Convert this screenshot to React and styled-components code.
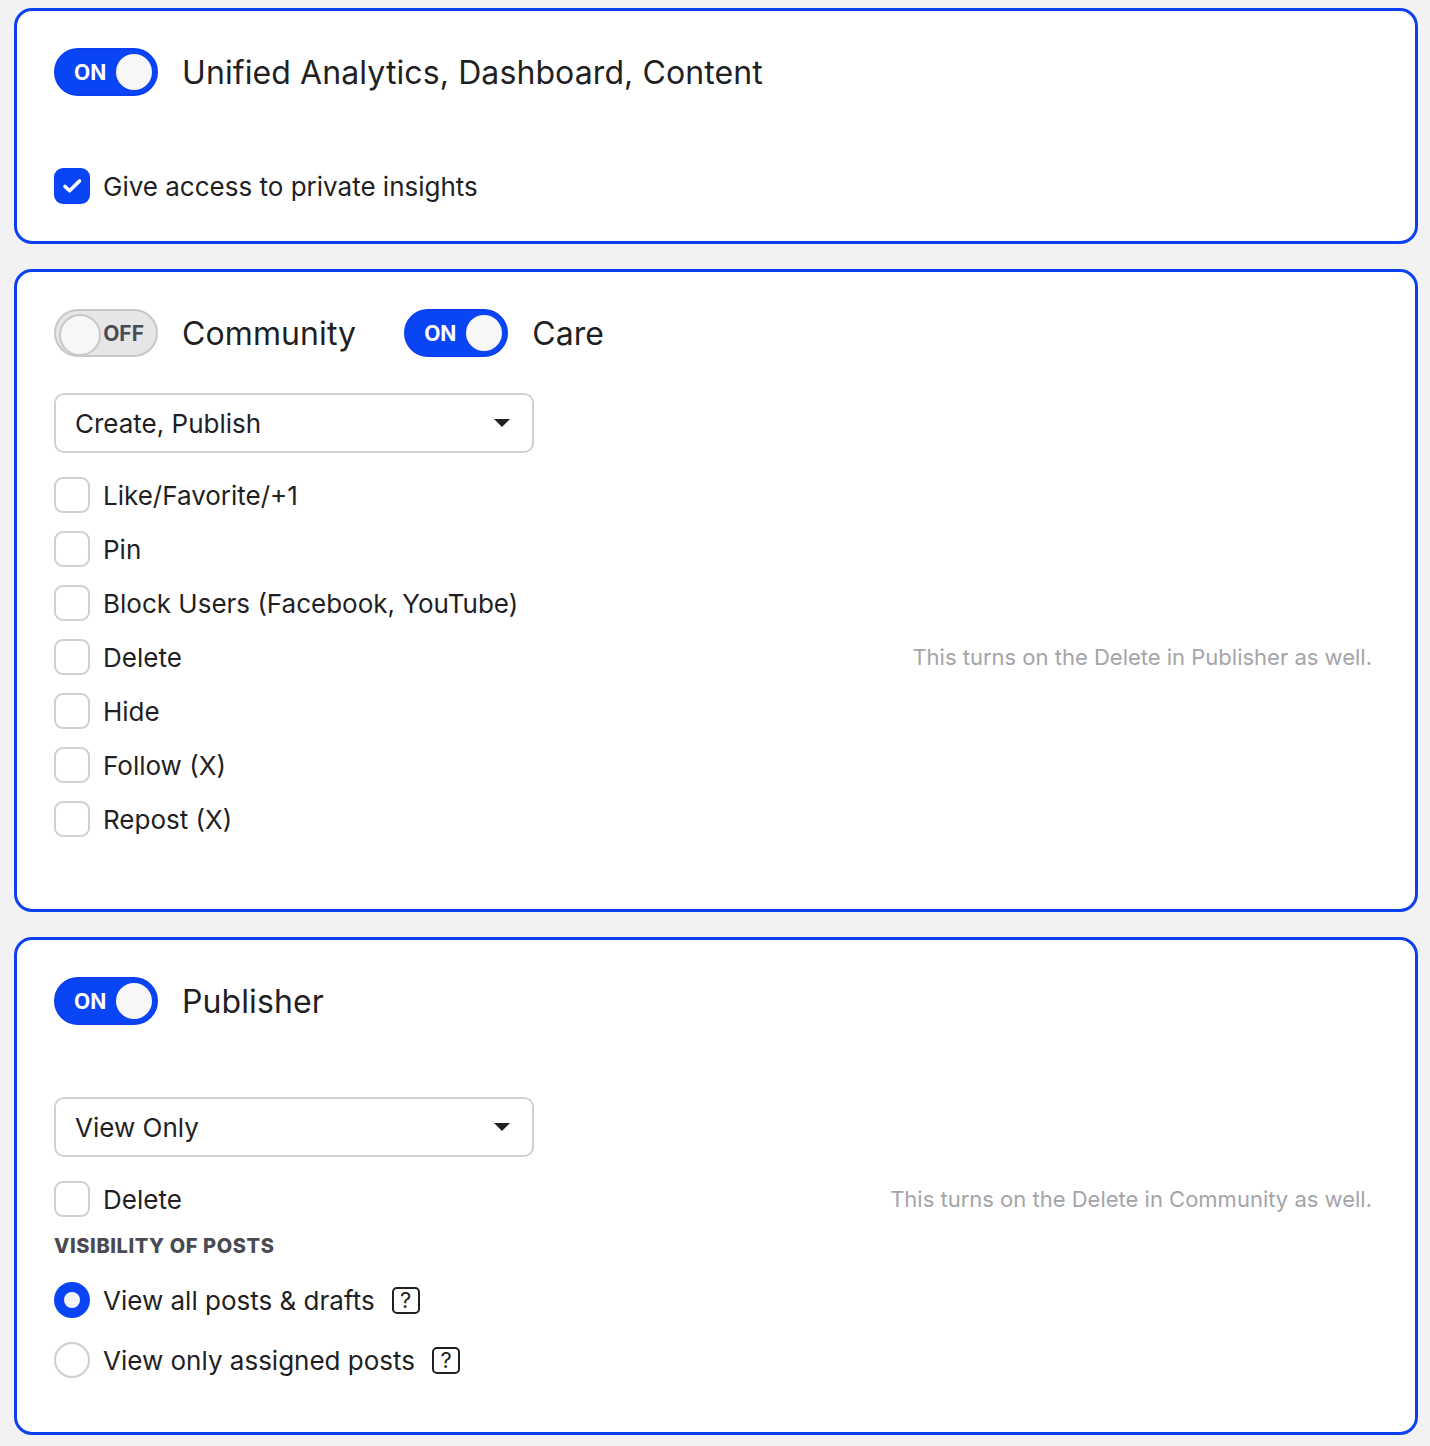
import styled, { createGlobalStyle } from 'styled-components';

const GlobalStyle = createGlobalStyle`
  * { box-sizing: border-box; }
  body {
    margin: 0;
    background: #f2f2f5;
    font-family: Inter, "Noto Sans", sans-serif;
    color: #1f1f24;
  }
`;

const Page = styled.div`
  display: flex;
  flex-direction: column;
  gap: 25px;
  padding: 8px 12px 11px 14px;
`;

const Card = styled.section`
  display: flex;
  flex-direction: column;
  padding: 37px 37px ${p => p.$bottom || 37}px 37px;
  background: #fff;
  border: 3px solid #0a40f0;
  border-radius: 18px;
`;

const ToggleRow = styled.div`
  display: flex;
  align-items: center;
  gap: 24px;
  height: 48px;
`;

const Switch = styled.div`
  position: relative;
  display: flex;
  align-items: center;
  width: 104px;
  height: 48px;
  border-radius: 999px;
  background: ${p => (p.$on ? '#0a45f5' : '#e6e6e8')};
  border: 2px solid ${p => (p.$on ? '#0a40f0' : '#c8c8cc')};
  flex-shrink: 0;

  span {
    position: absolute;
    top: 50%;
    transform: translateY(-50%);
    ${p => (p.$on ? 'left: 18px;' : 'right: 12px;')}
    font-size: 21px;
    font-weight: 700;
    color: ${p => (p.$on ? '#fff' : '#4a4a52')};
  }

  &::after {
    content: '';
    position: absolute;
    top: 4px;
    ${p => (p.$on ? 'right: 4px;' : 'left: 4px;')}
    width: 36px;
    height: 36px;
    border-radius: 50%;
    background: #f7f7f8;
    ${p => (!p.$on ? 'border: 2px solid #c8c8cc; top: 3px; left: 3px; width: 38px; height: 38px;' : '')}
  }
`;

const ToggleLabel = styled.span`
  font-size: 32px;
  letter-spacing: 0.1px;
  margin-right: 24px;
`;

const Option = styled.label`
  display: flex;
  align-items: center;
  gap: 13px;
  height: 36px;
  font-size: 26px;
`;

const Box = styled.span`
  display: flex;
  align-items: center;
  justify-content: center;
  width: 36px;
  height: 36px;
  border-radius: ${p => (p.$round ? '50%' : '9px')};
  border: 2px solid #cfcfd3;
  background: #fff;
  flex-shrink: 0;

  &[data-on='true'] {
    border: none;
    background: #0a45f5;
  }
`;

const RadioDot = styled.span`
  width: 16px;
  height: 16px;
  border-radius: 50%;
  background: #f5f5f6;
`;

const OptionList = styled.div`
  display: flex;
  flex-direction: column;
  gap: 18px;
  margin-top: ${p => p.$top || 0}px;
`;

const OptionLine = styled.div`
  display: flex;
  align-items: center;
  justify-content: space-between;
`;

const Hint = styled.span`
  font-size: 22px;
  color: #a4a4aa;
  margin-right: 6px;
`;

const Select = styled.div`
  display: flex;
  align-items: center;
  justify-content: space-between;
  width: 480px;
  height: 60px;
  margin-top: ${p => p.$top}px;
  padding: 0 22px 0 19px;
  border: 2px solid #d0d0d4;
  border-radius: 10px;
  font-size: 26px;
`;

const Caret = styled.span`
  width: 0;
  height: 0;
  border-left: 8px solid transparent;
  border-right: 8px solid transparent;
  border-top: 8px solid #1f1f24;
`;

const SectionTitle = styled.div`
  margin-top: 17px;
  font-size: 20px;
  font-weight: 800;
  color: #4a4a52;
  letter-spacing: 0.6px;
`;

const HelpIcon = styled.span`
  display: inline-flex;
  align-items: center;
  justify-content: center;
  width: 28px;
  height: 27px;
  margin-left: 4px;
  border: 2px solid #1f1f24;
  border-radius: 5px;
  font-size: 22px;
  line-height: 1;
`;

function Check({ on }) {
  return (
    <Box data-on={on ? 'true' : 'false'}>
      {on && (
        <svg width="36" height="36" viewBox="0 0 36 36">
          <path d="M11 18.5l4.6 4.3L25.5 13" fill="none" stroke="#fff" strokeWidth="3.6" strokeLinecap="round" strokeLinejoin="round" />
        </svg>
      )}
    </Box>
  );
}

function Toggle({ on }) {
  return (
    <Switch $on={on}>
      <span>{on ? 'ON' : 'OFF'}</span>
    </Switch>
  );
}

const careActions = [
  'Like/Favorite/+1',
  'Pin',
  'Block Users (Facebook, YouTube)',
  'Delete',
  'Hide',
  'Follow (X)',
  'Repost (X)',
];

export default function App() {
  return (
    <>
      <GlobalStyle />
      <Page>
        <Card>
          <ToggleRow>
            <Toggle on />
            <ToggleLabel>Unified Analytics, Dashboard, Content</ToggleLabel>
          </ToggleRow>
          <OptionList $top={72}>
            <Option>
              <Check on />
              Give access to private insights
            </Option>
          </OptionList>
        </Card>

        <Card $bottom={72}>
          <ToggleRow>
            <Toggle />
            <ToggleLabel>Community</ToggleLabel>
            <Toggle on />
            <ToggleLabel>Care</ToggleLabel>
          </ToggleRow>
          <Select $top={36}>
            Create, Publish
            <Caret />
          </Select>
          <OptionList $top={24}>
            {careActions.map(a => (
              <OptionLine key={a}>
                <Option>
                  <Check />
                  {a}
                </Option>
                {a === 'Delete' && <Hint>This turns on the Delete in Publisher as well.</Hint>}
              </OptionLine>
            ))}
          </OptionList>
        </Card>

        <Card $bottom={54}>
          <ToggleRow>
            <Toggle on />
            <ToggleLabel>Publisher</ToggleLabel>
          </ToggleRow>
          <Select $top={72}>
            View Only
            <Caret />
          </Select>
          <OptionList $top={24}>
            <OptionLine>
              <Option>
                <Check />
                Delete
              </Option>
              <Hint>This turns on the Delete in Community as well.</Hint>
            </OptionLine>
          </OptionList>
          <SectionTitle>VISIBILITY OF POSTS</SectionTitle>
          <OptionList $top={24}>
            <Option>
              <Box $round data-on="true">
                <RadioDot />
              </Box>
              View all posts &amp; drafts
              <HelpIcon>?</HelpIcon>
            </Option>
          </OptionList>
          <OptionList $top={24}>
            <Option>
              <Box $round />
              View only assigned posts
              <HelpIcon>?</HelpIcon>
            </Option>
          </OptionList>
        </Card>
      </Page>
    </>
  );
}
